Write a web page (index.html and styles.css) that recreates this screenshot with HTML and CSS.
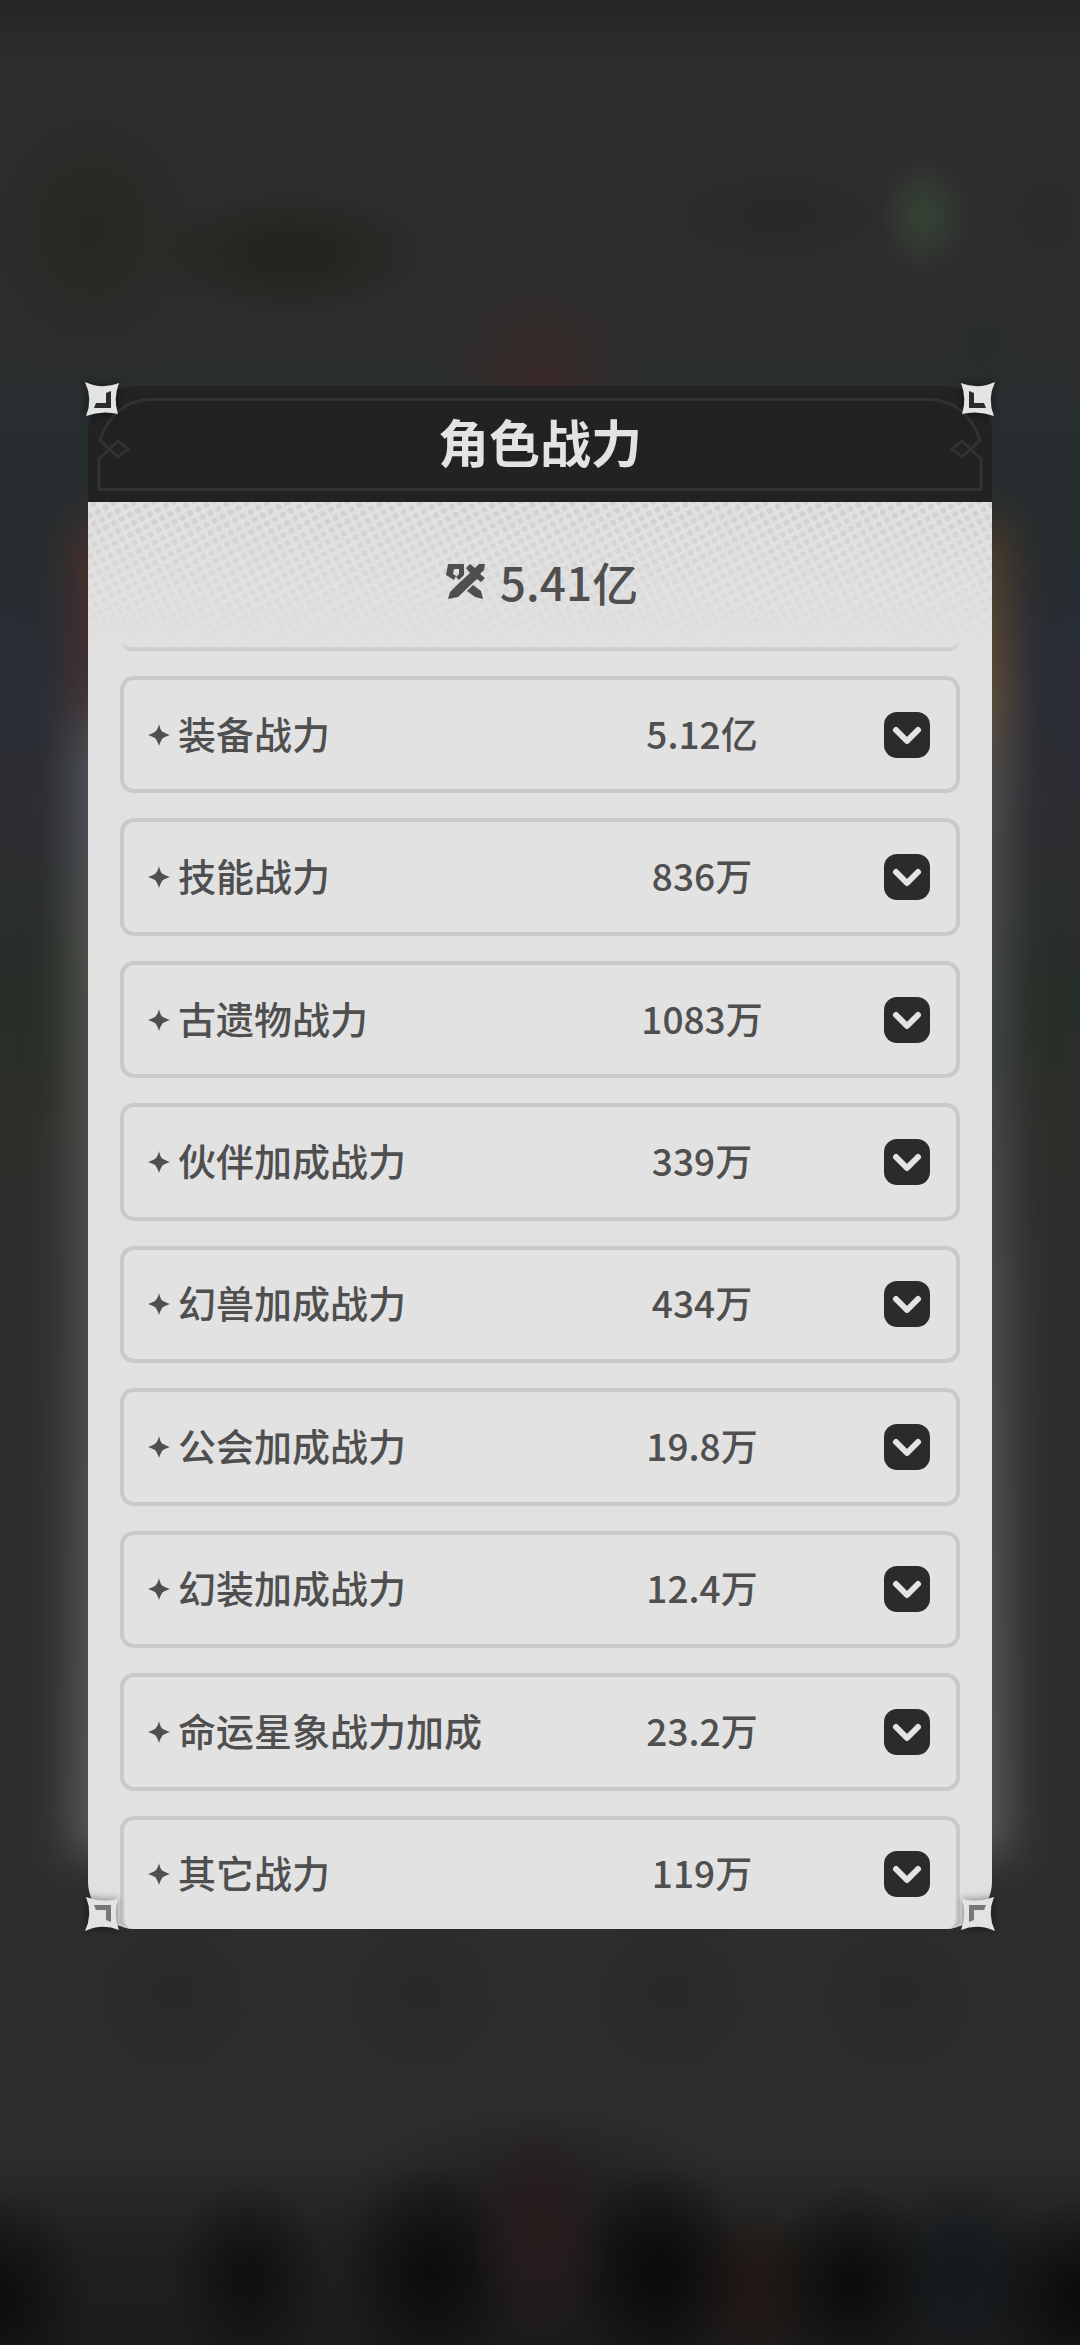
FILE: index.html
```html
<!DOCTYPE html>
<html lang="zh-CN">
<head>
    <meta charset="UTF-8">
    <meta name="viewport" content="width=device-width, initial-scale=1.0">
    <title>角色战力</title>
    <link rel="stylesheet" href="styles.css">
</head>
<body>
    <svg class="sprite" aria-hidden="true">
        <symbol id="star" viewBox="0 0 22 22">
            <path d="M11 0C12 5 14 8 15 8C17 9 19 10 22 11C19 12 17 13 15 14C14 15 12 18 11 22C10 18 8 15 7 14C5 13 3 12 0 11C3 10 5 9 7 8C8 7 10 5 11 0Z" fill="currentColor"/>
        </symbol>
        <symbol id="chevron" viewBox="0 0 46 46">
            <path d="M12 18L23 29L34 18" fill="none" stroke="currentColor" stroke-width="6" stroke-linecap="round" stroke-linejoin="round"/>
        </symbol>
        <symbol id="corner" viewBox="0 0 34 34">
            <path d="M0 0Q17 8 34 1Q28 17 33 32Q17 28 1 34Q8 17 0 0Z" fill="#e3e3e3"/>
            <path d="M21 11L26 9V26H9L11 21H21Z" fill="currentColor"/>
        </symbol>
        <symbol id="ornament" viewBox="0 0 62 116">
            <path d="M62 13.5C38 13.5 20 30 12 54L30 71L40 63L30 55L11 73V103.5H62" fill="none" stroke="currentColor" stroke-width="3"/>
        </symbol>
    </svg>

    <main class="stage">
        <div class="side-glow"></div>
        <section class="modal" aria-labelledby="title">
            <header class="modal-header">
                <svg class="ornament" aria-hidden="true"><use href="#ornament"/></svg>
                <h1 id="title">角色战力</h1>
                <svg class="ornament flip" aria-hidden="true"><use href="#ornament"/></svg>
            </header>

            <div class="modal-body">
                <svg class="halftone" aria-hidden="true">
                    <defs>
                        <pattern id="dots" width="9" height="9" patternUnits="userSpaceOnUse" patternTransform="rotate(-28)">
                            <circle cx="4" cy="4" r="3" fill="#d0d0d0"/>
                        </pattern>
                    </defs>
                    <rect width="100%" height="100%" fill="url(#dots)"/>
                </svg>

                <p class="total">
                    <svg class="total-icon" viewBox="0 0 40 37" aria-hidden="true">
                        <path d="M2 1H18V12L13 17L10 14L13 11V6H8L7 11L10 13L8 17L0 12Z" fill="currentColor"/>
                        <path d="M2 36L4 29L11 22L24 10L20 5L24 1L29 5L33 1H39L38 7L34 11L39 15L35 19L31 16L12 34Z" fill="currentColor"/>
                        <path d="M27 22L35 28L37 36L29 34L21 28Z" fill="currentColor"/>
                    </svg>
                    <span>5.41亿</span>
                </p>

                <ul class="power-list">
                    <li class="power-edge" aria-hidden="true"></li>
                    <li class="power-row">
                        <span class="name"><svg class="star"><use href="#star"/></svg>装备战力</span>
                        <span class="value">5.12亿</span>
                        <button class="toggle" type="button" aria-label="展开装备战力"><svg><use href="#chevron"/></svg></button>
                    </li>
                    <li class="power-row">
                        <span class="name"><svg class="star"><use href="#star"/></svg>技能战力</span>
                        <span class="value">836万</span>
                        <button class="toggle" type="button" aria-label="展开技能战力"><svg><use href="#chevron"/></svg></button>
                    </li>
                    <li class="power-row">
                        <span class="name"><svg class="star"><use href="#star"/></svg>古遗物战力</span>
                        <span class="value">1083万</span>
                        <button class="toggle" type="button" aria-label="展开古遗物战力"><svg><use href="#chevron"/></svg></button>
                    </li>
                    <li class="power-row">
                        <span class="name"><svg class="star"><use href="#star"/></svg>伙伴加成战力</span>
                        <span class="value">339万</span>
                        <button class="toggle" type="button" aria-label="展开伙伴加成战力"><svg><use href="#chevron"/></svg></button>
                    </li>
                    <li class="power-row">
                        <span class="name"><svg class="star"><use href="#star"/></svg>幻兽加成战力</span>
                        <span class="value">434万</span>
                        <button class="toggle" type="button" aria-label="展开幻兽加成战力"><svg><use href="#chevron"/></svg></button>
                    </li>
                    <li class="power-row">
                        <span class="name"><svg class="star"><use href="#star"/></svg>公会加成战力</span>
                        <span class="value">19.8万</span>
                        <button class="toggle" type="button" aria-label="展开公会加成战力"><svg><use href="#chevron"/></svg></button>
                    </li>
                    <li class="power-row">
                        <span class="name"><svg class="star"><use href="#star"/></svg>幻装加成战力</span>
                        <span class="value">12.4万</span>
                        <button class="toggle" type="button" aria-label="展开幻装加成战力"><svg><use href="#chevron"/></svg></button>
                    </li>
                    <li class="power-row">
                        <span class="name"><svg class="star"><use href="#star"/></svg>命运星象战力加成</span>
                        <span class="value">23.2万</span>
                        <button class="toggle" type="button" aria-label="展开命运星象战力加成"><svg><use href="#chevron"/></svg></button>
                    </li>
                    <li class="power-row">
                        <span class="name"><svg class="star"><use href="#star"/></svg>其它战力</span>
                        <span class="value">119万</span>
                        <button class="toggle" type="button" aria-label="展开其它战力"><svg><use href="#chevron"/></svg></button>
                    </li>
                </ul>
            </div>

            <svg class="corner top-left" aria-hidden="true"><use href="#corner"/></svg>
            <svg class="corner top-right" aria-hidden="true"><use href="#corner"/></svg>
            <svg class="corner bottom-left" aria-hidden="true"><use href="#corner"/></svg>
            <svg class="corner bottom-right" aria-hidden="true"><use href="#corner"/></svg>
        </section>
    </main>
</body>
</html>
```
FILE: styles.css
```css
* {
    box-sizing: border-box;
}

body {
    margin: 0;
    background-color: #2e2e2e;
    color: #4f4f4f;
    font-family: "Noto Sans CJK SC", sans-serif;
    font-weight: 500;
}

.sprite {
    position: absolute;
    width: 0;
    height: 0;
}

/* Blurred game scene behind the dialog */
.stage {
    position: relative;
    display: flex;
    min-height: 100vh;
    padding: 386px 88px 416px;
    overflow: hidden;
    background:
        radial-gradient(44px 54px at 85.5% 9.2%, #344034 20%, transparent),
        radial-gradient(140px 60px at 72% 9.2%, #292927 20%, transparent),
        radial-gradient(50px 60px at 97% 9.2%, #2a2a28 20%, transparent),
        radial-gradient(150px 70px at 27% 10.8%, #22251e 20%, transparent),
        radial-gradient(130px 150px at 8.5% 9.8%, #292723 10%, transparent),
        radial-gradient(100px 110px at 50% 16.5%, #382a28 10%, transparent),
        radial-gradient(60px 60px at 91% 14.5%, #292c2d 10%, transparent),
        radial-gradient(70px 110px at 50% 95%, #281c1d 10%, transparent),
        radial-gradient(90px 110px at 0% 98%, #0e0e0d 10%, transparent),
        radial-gradient(80px 100px at 23% 97.2%, #10110e 10%, transparent),
        radial-gradient(90px 110px at 40% 97%, #0d0d0e 10%, transparent),
        radial-gradient(90px 110px at 61% 97%, #0b0b0b 10%, transparent),
        radial-gradient(90px 100px at 79% 97.4%, #0b0d0c 10%, transparent),
        radial-gradient(100px 100px at 100% 98%, #0c0c0c 10%, transparent),
        radial-gradient(80px 80px at 70% 97.6%, #211714 10%, transparent),
        radial-gradient(90px 100px at 89% 97%, #14191e 10%, transparent),
        radial-gradient(240px 170px at 50% 97%, #1c1a1b 20%, transparent),
        radial-gradient(100px 90px at 16% 85%, #292929 10%, transparent),
        radial-gradient(100px 90px at 39% 85%, #292929 10%, transparent),
        radial-gradient(100px 90px at 62% 85%, #292929 10%, transparent),
        radial-gradient(100px 90px at 83% 85%, #292929 10%, transparent),
        linear-gradient(#252525 0%, #2e2e2e 3%, #2e2e2e 14%, #282e30 18%, #262c2e 23%, #2a2d37 29%, #2d2d31 35%, #272e27 43%, #2e2e2b 48%, #2e2e2e 56%, #2e2e2e 80%, #2c2c2c 92%, #20201e 96%, #1c1c1c 100%);
}

/* Light that leaks out on both sides of the dialog */
.side-glow {
    position: absolute;
    top: 520px;
    bottom: 490px;
    left: 70px;
    right: 70px;
    filter: blur(20px);
    background:
        linear-gradient(#46302e 0%, #46302e 12%, #4f555a 18%, #50535a 24%, #53554e 32%, #50504e 45%, #504e50 60%, #5a5a58 100%) left / 50% 100% no-repeat,
        linear-gradient(#483828 0%, #62503a 13%, #505050 20%, #45474a 40%, #505050 60%, #5a5a58 100%) right / 50% 100% no-repeat;
}

.modal {
    position: relative;
    display: flex;
    flex: 1;
    flex-direction: column;
    min-width: 0;
}

.modal-header {
    display: flex;
    height: 116px;
    background-color: #222222;
    border-radius: 48px 48px 0 0;
}

.ornament {
    width: 62px;
    height: 116px;
    color: #313131;
}

.flip {
    transform: scaleX(-1);
}

h1 {
    flex: 1;
    margin: 12px 0 11px;
    border-top: 3px solid #313131;
    border-bottom: 3px solid #313131;
    color: #e3e3e3;
    font-size: 51px;
    font-weight: 700;
    line-height: 80px;
    text-align: center;
}

.modal-body {
    position: relative;
    display: flex;
    flex: 1;
    flex-direction: column;
    overflow: hidden;
    background-color: #e1e1e1;
    border-radius: 0 0 48px 48px;
}

.halftone {
    position: absolute;
    top: 0;
    left: 0;
    width: 100%;
    height: 150px;
    -webkit-mask-image: linear-gradient(#000, transparent);
    mask-image: linear-gradient(#000, transparent);
}

.total {
    position: relative;
    display: flex;
    align-items: center;
    justify-content: center;
    gap: 14px;
    height: 138px;
    margin: 0;
    padding: 20px 0 0 4px;
    font-size: 46px;
    line-height: 60px;
}

.total-icon {
    width: 40px;
    height: 37px;
}

/* The last row runs slightly past the bottom edge and is cut off there */
.power-list {
    display: grid;
    flex: 1;
    grid-template-rows: 11px;
    grid-auto-rows: 1fr;
    gap: 25px;
    margin: 0 32px -4px;
    padding: 0;
    list-style: none;
}

.power-edge {
    border: 4px solid #cacaca;
    border-top: 0;
    border-radius: 0 0 14px 14px;
    -webkit-mask-image: linear-gradient(transparent, #000);
    mask-image: linear-gradient(transparent, #000);
}

.power-row {
    display: grid;
    grid-template-columns: 1fr 240px 108px;
    align-items: center;
    padding: 0 26px 0 24px;
    border: 4px solid #c9c9c9;
    border-radius: 14px;
    background-color: #e2e2e2;
}

.name {
    display: flex;
    align-items: center;
    gap: 8px;
    padding-bottom: 4px;
    font-size: 38px;
    line-height: 48px;
    white-space: nowrap;
}

.star {
    width: 22px;
    height: 22px;
    margin-top: 4px;
}

.value {
    padding-bottom: 4px;
    font-size: 37px;
    line-height: 48px;
    text-align: center;
}

.toggle {
    justify-self: end;
    width: 46px;
    height: 46px;
    padding: 0;
    border: none;
    border-radius: 13px;
    background-color: #2b2b2b;
    color: #e3e3e3;
    cursor: pointer;
}

.toggle svg {
    display: block;
    width: 46px;
    height: 46px;
}

.corner {
    position: absolute;
    width: 34px;
    height: 34px;
    color: #2a2a2a;
    filter: drop-shadow(0 0 4px rgba(0, 0, 0, 0.5));
}

.top-left {
    top: -4px;
    left: -3px;
}

.top-right {
    top: -4px;
    right: -3px;
    transform: scaleX(-1);
}

.bottom-left {
    bottom: -2px;
    left: -3px;
    color: #777777;
    transform: scaleY(-1);
}

.bottom-right {
    bottom: -2px;
    right: -3px;
    color: #777777;
    transform: scale(-1);
}
```
